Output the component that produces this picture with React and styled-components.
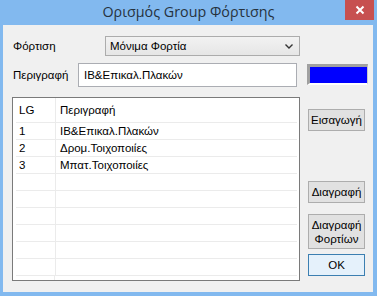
import React from "react";
import styled, { createGlobalStyle } from "styled-components";

const Global = createGlobalStyle`
  html, body { margin: 0; padding: 0; background: #ffffff; }
  * { box-sizing: border-box; }
`;

const Window = styled.div`
  width: 377px;
  height: 296px;
  background: #82b9ef;
  display: flex;
  flex-direction: column;
  font-family: "Liberation Sans", Arial, sans-serif;
  font-size: 11.5px;
  color: #000;
`;

const TitleBar = styled.div`
  height: 25px;
  display: grid;
  grid-template-columns: 1fr auto 1fr;
  align-items: start;
`;

const Title = styled.div`
  grid-column: 2;
  font-family: "Open Sans", "Noto Sans", sans-serif;
  font-size: 14.3px;
  line-height: 24px;
  color: #26323e;
`;

const CloseButton = styled.div`
  grid-column: 3;
  justify-self: end;
  margin-right: 3px;
  width: 29px;
  height: 20px;
  background: #c75050;
  display: flex;
  align-items: center;
  justify-content: center;
`;

const Client = styled.div`
  flex: 1;
  margin: 0 4px 4px 3px;
  background: #f0f0f0;
  padding: 11px 0 0 9px;
  display: flex;
  flex-direction: column;
`;

const Row = styled.div`
  display: flex;
  align-items: flex-start;
  margin-top: ${(p) => p.$mt || 0}px;
`;

const Label = styled.div`
  width: ${(p) => p.$w}px;
  height: ${(p) => p.$h}px;
  line-height: ${(p) => p.$h}px;
  padding-left: 1px;
  color: #000;
`;

const Combo = styled.div`
  width: 195px;
  height: 20px;
  border: 1px solid #acacac;
  background: linear-gradient(#f2f2f2, #e6e6e6);
  display: flex;
  align-items: center;
  justify-content: space-between;
  padding: 0 6px 0 4px;
`;

const Input = styled.div`
  width: 219px;
  height: 24px;
  border: 1px solid #abadb3;
  background: #fff;
  display: flex;
  align-items: center;
  padding-left: 5px;
`;

const ColorBox = styled.div`
  width: 61px;
  height: 21px;
  margin-left: 10px;
  margin-top: 1px;
  border-style: solid;
  border-width: 3px 1px 2px 3px;
  border-color: #a0a0a0 #c8c8c8 #ffffff #a0a0a0;
  background: ${(p) => p.$color};
`;

const List = styled.div`
  width: 288px;
  height: 184px;
  border: 1px solid #7a7a7a;
  background: #fff;
  display: flex;
  flex-direction: column;
  padding: 0 2px;
`;

const ListRow = styled.div`
  display: grid;
  grid-template-columns: 40px 1fr;
  height: ${(p) => (p.$header ? 25 : 17)}px;
  border-bottom: 1px solid #ebebeb;
  margin-left: 1px;
`;

const Cell = styled.div`
  display: flex;
  align-items: center;
  padding-left: 4px;
  border-right: ${(p) => (p.$first ? "1px solid #ebebeb" : "none")};
  margin-left: ${(p) => (p.$first ? -1 : 0)}px;
  white-space: nowrap;
`;

const Filler = styled.div`
  flex: 1;
  display: grid;
  grid-template-columns: 40px 1fr;
`;

const FillerCol = styled.div`
  border-right: 1px solid #ebebeb;
`;

const ButtonCol = styled.div`
  display: flex;
  flex-direction: column;
  margin-left: 8px;
  width: 57px;
`;

const Button = styled.div`
  margin-top: ${(p) => p.$mt}px;
  height: ${(p) => p.$h || 22}px;
  border: 1px solid ${(p) => (p.$default ? "#3c7fb1" : "#adadad")};
  background: ${(p) => (p.$default ? "#e5f1fb" : "#e1e1e1")};
  display: flex;
  align-items: center;
  justify-content: center;
  text-align: center;
  line-height: 14px;
  color: #000;
`;

const rows = [
  ["1", "ΙΒ&Επικαλ.Πλακών"],
  ["2", "Δρομ.Τοιχοποιίες"],
  ["3", "Μπατ.Τοιχοποιίες"],
  ["", ""],
  ["", ""],
  ["", ""],
  ["", ""],
  ["", ""],
  ["", ""],
];

export default function App() {
  return (
    <>
      <Global />
      <Window>
        <TitleBar>
          <Title>Ορισμός Group Φόρτισης</Title>
          <CloseButton>
            <svg width="10" height="10" viewBox="0 0 10 10">
              <path d="M1.5 1.5 L8.5 8.5 M8.5 1.5 L1.5 8.5" stroke="#fff" strokeWidth="2" />
            </svg>
          </CloseButton>
        </TitleBar>
        <Client>
          <Row>
            <Label $w={93} $h={20}>Φόρτιση</Label>
            <Combo>
              <span>Μόνιμα Φορτία</span>
              <svg width="8" height="5" viewBox="0 0 8 5">
                <path d="M0.5 0.5 L4 4 L7.5 0.5" stroke="#333" strokeWidth="1.4" fill="none" />
              </svg>
            </Combo>
          </Row>
          <Row $mt={7}>
            <Label $w={66} $h={24}>Περιγραφή</Label>
            <Input>ΙΒ&amp;Επικαλ.Πλακών</Input>
            <ColorBox $color="#0000ff" />
          </Row>
          <Row $mt={10}>
            <List>
              <ListRow $header>
                <Cell $first>LG</Cell>
                <Cell>Περιγραφή</Cell>
              </ListRow>
              {rows.map((r, i) => (
                <ListRow key={i}>
                  <Cell $first>{r[0]}</Cell>
                  <Cell>{r[1]}</Cell>
                </ListRow>
              ))}
              <Filler>
                <FillerCol />
              </Filler>
            </List>
            <ButtonCol>
              <Button $mt={12}>Εισαγωγή</Button>
              <Button $mt={50}>Διαγραφή</Button>
              <Button $mt={11} $h={35}>Διαγραφή<br />Φορτίων</Button>
              <Button $mt={5} $default>OK</Button>
            </ButtonCol>
          </Row>
        </Client>
      </Window>
    </>
  );
}
